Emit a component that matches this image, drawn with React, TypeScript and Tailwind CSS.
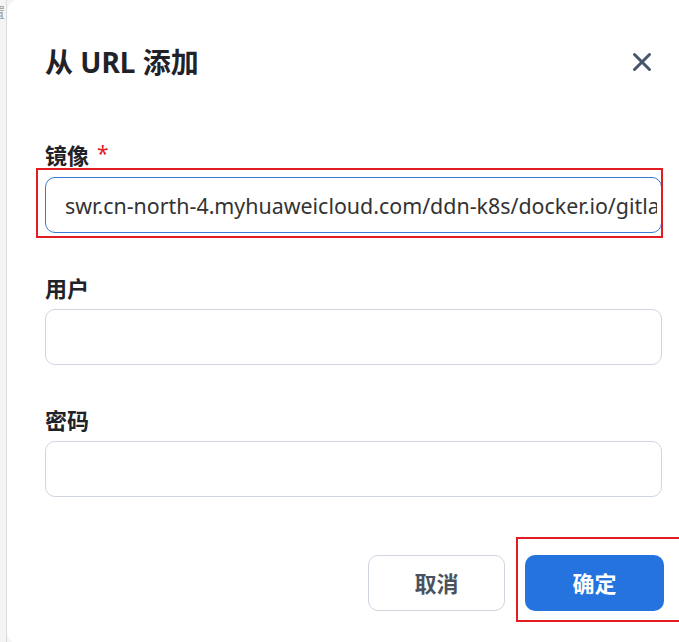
import { X } from "lucide-react";

// ── Form field ─────────────────────────────────────────────────────────────
type FieldProps = {
  label: string;
  required?: boolean;
  value?: string;
  focused?: boolean;
  type?: string;
};

function Field({ label, required, value, focused, type = "text" }: FieldProps) {
  return (
    <div className="flex flex-col">
      <label className="flex h-7 items-center gap-[8px] text-[22px] font-bold leading-7 text-[#1f2329]">
        {label}
        {required && <span className="mt-[-4px] text-[21px] font-normal text-[#e31b23]">*</span>}
      </label>
      <input
        type={type}
        readOnly
        value={value ?? ""}
        className={
          focused
            ? "mt-[8px] h-[56px] w-full rounded-[10px] border border-[#3a7bd5] bg-white pl-[19px] pr-[4px] text-[21.4px] text-[#333333] outline-none"
            : "mt-[7px] h-[56px] w-full rounded-[10px] border border-[#cfd6e0] bg-white pl-[19px] pr-[4px] text-[21.4px] text-[#333333] outline-none"
        }
      />
    </div>
  );
}

// ── Main ───────────────────────────────────────────────────────────────────
export default function App() {
  return (
    <div className="relative flex h-[642px] w-[679px] overflow-hidden bg-[#f4f4f4] font-['Noto_Sans','Noto_Sans_CJK_SC',sans-serif]">
      {/* page behind the dialog */}
      <div className="w-[7px] shrink-0 overflow-hidden border-r border-[#dcdcdc] pt-[4px]">
        <span className="ml-[-8px] block text-[13px] leading-4 text-[#9a9a9a]">置</span>
      </div>

      {/* dialog */}
      <div className="mt-[-1px] flex h-[646px] w-[693px] shrink-0 flex-col rounded-[14px] bg-white px-[38px] pt-[47px]">
        <div className="flex h-8 items-center justify-between">
          <h2 className="text-[28px] font-bold leading-8 text-[#1f2329]">从 URL 添加</h2>
          <button className="mr-[2px] flex h-9 w-9 items-center justify-center text-[#475569]">
            <X size={30} strokeWidth={2.4} />
          </button>
        </div>

        <div className="mt-[63px] flex flex-col gap-[41px]">
          <Field
            label="镜像"
            required
            focused
            value="swr.cn-north-4.myhuaweicloud.com/ddn-k8s/docker.io/gitlab/gitlab-ce:latest"
          />
          <Field label="用户" />
          <Field label="密码" type="password" />
        </div>

        <div className="mt-[58px] flex justify-end gap-[20px]">
          <button className="h-[56px] w-[137px] rounded-[10px] border border-[#cfd6e0] bg-white text-[22px] font-bold text-[#4a5260]">
            取消
          </button>
          <button className="mr-[-2px] h-[56px] w-[139px] rounded-[10px] bg-[#2473de] text-[22px] font-bold text-white">
            确定
          </button>
        </div>
      </div>

      {/* review marks */}
      <div className="pointer-events-none absolute left-[36px] top-[168px] h-[70px] w-[627px] border-2 border-[#e31b23]" />
      <div className="pointer-events-none absolute left-[516px] top-[537px] h-[85px] w-[180px] border-2 border-[#e31b23]" />
    </div>
  );
}
